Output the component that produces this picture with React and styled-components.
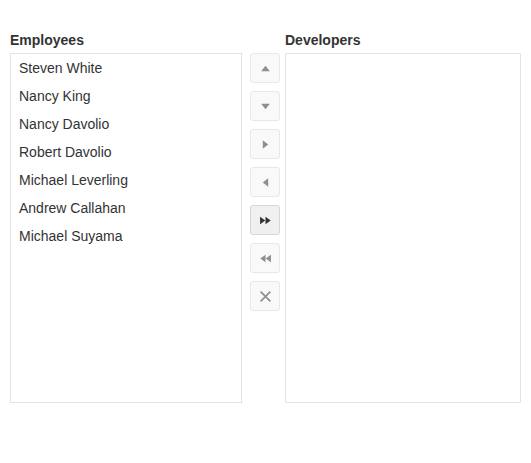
import React from 'react';
import styled, { createGlobalStyle } from 'styled-components';

const GlobalStyle = createGlobalStyle`
  body {
    margin: 0;
    background: #fff;
    font-family: "Liberation Sans", Arial, sans-serif;
    color: #333;
  }
`;

const Page = styled.div`
  display: flex;
  align-items: flex-start;
  padding: 30px 10px 0 10px;
`;

const Column = styled.div`
  display: flex;
  flex-direction: column;
  width: ${p => p.width}px;
`;

const Label = styled.div`
  font-size: 14px;
  font-weight: bold;
  line-height: 20px;
  height: 20px;
  margin-bottom: 3px;
  color: #333;
`;

const ListBox = styled.ul`
  margin: 0;
  padding: 0;
  list-style: none;
  height: 348px;
  border: 1px solid #e3e3e3;
  background: #fff;
`;

const Item = styled.li`
  height: 28px;
  line-height: 28px;
  padding-left: 8px;
  font-size: 14px;
  color: #333;
`;

const Toolbar = styled.div`
  display: flex;
  flex-direction: column;
  gap: 8px;
  margin: 23px 5px 0 8px;
`;

const ToolButton = styled.button`
  width: 30px;
  height: 30px;
  padding: 0;
  display: flex;
  align-items: center;
  justify-content: center;
  border-radius: 3px;
  border: 1px solid ${p => (p.active ? '#d6d6d6' : '#e8e8e8')};
  background: ${p => (p.active ? '#f0f0f0' : '#f9f9f9')};
  color: ${p => (p.active ? '#333' : '#8e8e8e')};
  cursor: pointer;
`;

const Icon = ({ children }) => (
  <svg width="13" height="13" viewBox="0 0 12 12" fill="currentColor">
    {children}
  </svg>
);

const icons = {
  up: <Icon><polygon points="2,8.5 10,8.5 6,3.5" /></Icon>,
  down: <Icon><polygon points="2,3.5 10,3.5 6,8.5" /></Icon>,
  right: <Icon><polygon points="3.5,2 3.5,10 8.5,6" /></Icon>,
  left: <Icon><polygon points="8.5,2 8.5,10 3.5,6" /></Icon>,
  allRight: (
    <Icon>
      <polygon points="1,2.5 1,9.5 5.8,6" />
      <polygon points="6,2.5 6,9.5 10.8,6" />
    </Icon>
  ),
  allLeft: (
    <Icon>
      <polygon points="6,2.5 6,9.5 1.2,6" />
      <polygon points="11,2.5 11,9.5 6.2,6" />
    </Icon>
  ),
  clear: (
    <Icon>
      <path d="M1.5 1.5 L10.5 10.5 M10.5 1.5 L1.5 10.5" stroke="currentColor" strokeWidth="1.5" fill="none" />
    </Icon>
  ),
};

const employees = [
  'Steven White',
  'Nancy King',
  'Nancy Davolio',
  'Robert Davolio',
  'Michael Leverling',
  'Andrew Callahan',
  'Michael Suyama',
];

const tools = ['up', 'down', 'right', 'left', 'allRight', 'allLeft', 'clear'];

export default function App() {
  return (
    <>
      <GlobalStyle />
      <Page>
        <Column width={232}>
          <Label>Employees</Label>
          <ListBox>
            {employees.map(name => (
              <Item key={name}>{name}</Item>
            ))}
          </ListBox>
        </Column>
        <Toolbar>
          {tools.map(t => (
            <ToolButton key={t} active={t === 'allRight'}>
              {icons[t]}
            </ToolButton>
          ))}
        </Toolbar>
        <Column width={236}>
          <Label>Developers</Label>
          <ListBox />
        </Column>
      </Page>
    </>
  );
}
